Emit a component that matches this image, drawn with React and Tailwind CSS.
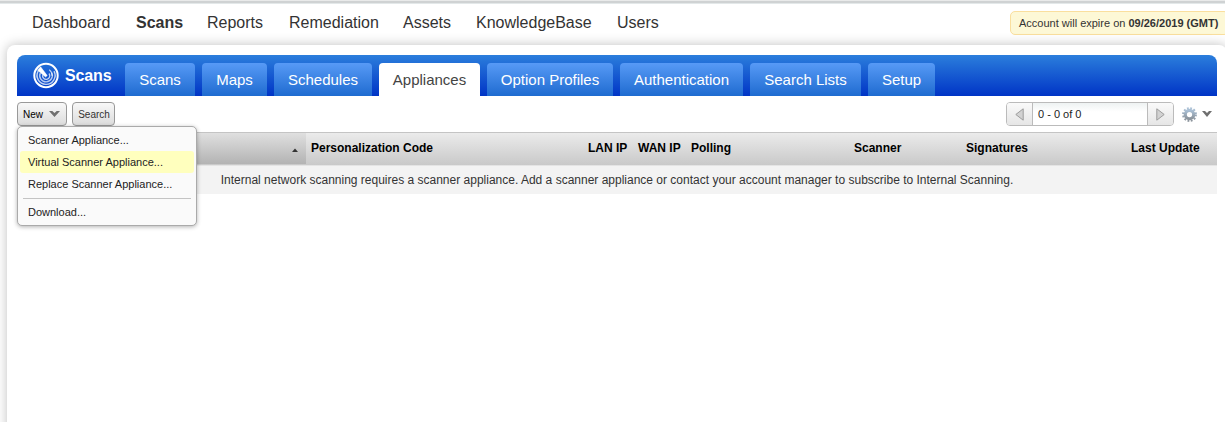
const NAV = [
  ['Dashboard', 'w-[104px]'],
  ['Scans', 'w-[71px] font-bold'],
  ['Reports', 'w-[82px]'],
  ['Remediation', 'w-[114px]'],
  ['Assets', 'w-[73px]'],
  ['KnowledgeBase', 'w-[141px]'],
  ['Users', 'w-[60px]'],
];

const TABS = [
  ['Scans', 'w-[70px]'],
  ['Maps', 'w-[65px]'],
  ['Schedules', 'w-[98px]'],
  ['Appliances', 'w-[101px]'],
  ['Option Profiles', 'w-[126px]'],
  ['Authentication', 'w-[123px]'],
  ['Search Lists', 'w-[111px]'],
  ['Setup', 'w-[67px]'],
];

const COLUMNS = [
  ['Personalization Code', 'w-[277px]'],
  ['LAN IP', 'w-[50px]'],
  ['WAN IP', 'w-[53px]'],
  ['Polling', 'w-[163px]'],
  ['Scanner', 'w-[112px]'],
  ['Signatures', 'w-[165px]'],
  ['Last Update', 'w-[80px]'],
];

function Radar() {
  return (
    <svg width="27" height="27" viewBox="0 0 27 27" fill="none" stroke="#fff">
      <circle cx="14" cy="13.5" r="11.7" strokeWidth="2" />
      <path d="M6.2 9A9 9 0 1 0 22 9.2" strokeWidth="1.4" opacity=".75" />
      <path d="M8.3 11A6.3 6.3 0 1 0 19.6 10.6" strokeWidth="1.4" opacity=".7" />
      <path d="M10.8 12.6A3.6 3.6 0 1 0 17 11.5" strokeWidth="1.3" opacity=".75" />
      <path d="M17.2 7.8q3 2.2 2.9 6.2" strokeWidth="1.1" opacity=".7" />
      <path d="M5.5 8.2 8.6 4.8 15.2 13.6 13.6 15Z" fill="#fff" strokeWidth=".5" />
    </svg>
  );
}

function Chevron({ className }) {
  return (
    <svg className={className} height="6" viewBox="0 0 12 6" preserveAspectRatio="none" fill="#707070">
      <path d="M0 0h3.6L6 2 8.4 0H12L6 6Z" />
    </svg>
  );
}

function Gear() {
  return (
    <svg width="15" height="15" viewBox="0 0 16 16">
      <defs>
        <linearGradient id="gear" x2="0" y2="1">
          <stop stopColor="#a9c0d6" />
          <stop offset="1" stopColor="#8b939b" />
        </linearGradient>
      </defs>
      <circle cx="8" cy="8" r="4.5" fill="none" stroke="url(#gear)" strokeWidth="3.4" />
      <circle cx="8" cy="8" r="6.8" fill="none" stroke="url(#gear)" strokeWidth="2.2" strokeDasharray="1.9 1.66" />
    </svg>
  );
}

function Arrow({ left }) {
  return (
    <svg width="9" height="13" viewBox="0 0 9 13" fill="#d2d2d2" stroke="#9c9c9c">
      <path d={left ? 'M8.2 .8v11.4L.8 6.5Z' : 'M.8 .8v11.4l7.4-5.7Z'} />
    </svg>
  );
}

function MenuItem({ label, active }) {
  return (
    <div className={`mx-[2px] flex h-[22px] items-center rounded-[3px] pl-2 ${active ? 'bg-[#ffffbe]' : ''}`}>{label}</div>
  );
}

export default function App() {
  return (
    <div className="flex h-[422px] w-[1225px] flex-col overflow-hidden bg-white font-['Liberation_Sans',Arial,sans-serif] text-[#333]">
      <div className="h-1 shrink-0 border-t border-b border-t-[#e9eaea] border-b-[#e3e8e9] bg-[#cfd2d3]" />
      <div className="flex h-[41px] shrink-0 items-start justify-between">
        <nav className="flex pt-[7px] pl-8 text-[16px] leading-6">
          {NAV.map(([label, cls]) => (
            <a key={label} className={cls}>{label}</a>
          ))}
        </nav>
        <div className="mt-[7px] -mr-1 flex h-6 w-[219px] items-center rounded-[5px] border border-[#fadf9e] bg-[#fdf8d6] pl-2 text-[11px] whitespace-pre">
          Account will expire on <b>09/26/2019 (GMT)</b>
        </div>
      </div>

      <main className="ml-[7px] h-[400px] w-[1220px] shrink-0 rounded-t-[8px] bg-white px-[10px] pt-[10px] shadow-[0_0_12px_rgba(0,0,0,0.25)]">
        <header className="flex h-[41px] items-end rounded-t-[8px] bg-linear-to-b/srgb from-[#2b7edc] to-[#0034c6]">
          <div className="flex h-[41px] w-[108px] items-center pl-[15px] text-[16px] font-bold text-white">
            <Radar />
            <span className="ml-[6px] leading-none tracking-[-0.15px]">Scans</span>
          </div>
          <div className="flex gap-[7px]">
            {TABS.map(([label, cls]) => (
              <div
                key={label}
                className={`flex h-[33px] items-center justify-center rounded-t-[4px] pt-[2px] text-[15px] whitespace-nowrap ${cls} ${
                  label === 'Appliances' ? 'bg-white text-[#444]' : 'bg-linear-to-b/srgb from-[#579af6] to-[#1f6bd0] text-white'
                }`}
              >
                {label}
              </div>
            ))}
          </div>
        </header>

        <div className="flex h-9 items-start justify-between pt-[6px]">
          <div className="flex gap-[5px] text-[10px]">
            <div className="relative">
              <button className="flex h-6 w-[50px] items-center justify-between rounded-[4px] border border-[#999] bg-linear-to-b from-[#f8f8f8] to-[#dcdcdc] pr-[6px] pl-[5px] text-black">
                New
                <Chevron className="w-[11px]" />
              </button>
              <div className="absolute top-6 left-0 z-10 h-[100px] w-[180px] rounded-[5px] border border-[#aaa] bg-[#fafafa] pt-[2px] text-[11px] text-[#222] shadow-[0_1px_4px_rgba(0,0,0,0.3)]">
                <MenuItem label="Scanner Appliance..." />
                <MenuItem label="Virtual Scanner Appliance..." active />
                <MenuItem label="Replace Scanner Appliance..." />
                <div className="mx-[5px] mt-[3px] mb-[2px] h-px bg-[#c4c4c4]" />
                <MenuItem label="Download..." />
              </div>
            </div>
            <button className="h-6 w-[43px] rounded-[4px] border border-[#999] bg-linear-to-b from-[#f8f8f8] to-[#dcdcdc] pl-px">Search</button>
          </div>
          <div className="flex items-center pr-[5px]">
            <div className="flex h-6 w-[168px] overflow-hidden rounded-[4px] border border-[#bbb] text-[11px] text-[#222]">
              <div className="flex w-[26px] items-center justify-center border-r border-[#bbb] bg-linear-to-b from-[#fafafa] to-[#e6e6e6]">
                <Arrow left />
              </div>
              <div className="flex flex-1 items-center bg-linear-to-b from-[#eef2f2] to-white to-40% pl-[5px]">0 - 0 of 0</div>
              <div className="flex w-[26px] items-center justify-center border-l border-[#bbb] bg-linear-to-b from-[#fafafa] to-[#e6e6e6]">
                <Arrow />
              </div>
            </div>
            <div className="ml-2 flex items-center gap-[5px]">
              <Gear />
              <Chevron className="w-[10px]" />
            </div>
          </div>
        </div>

        <section className="text-[12px]">
          <div className="flex h-[33px] border-t border-[#c4c4c4] bg-linear-to-b from-[#ebebeb] to-[#c9c9c9] leading-[30px] font-bold text-black">
            <div className="flex h-[31px] w-[289px] justify-end bg-linear-to-b from-[#e0e0e0] to-[#b3b3b3] pt-[15px] pr-2">
              <svg width="6" height="4" viewBox="0 0 6 4" fill="#333">
                <path d="M0 4 3 .5 6 4Z" />
              </svg>
            </div>
            <div className="flex pl-[5px] whitespace-nowrap">
              {COLUMNS.map(([label, cls]) => (
                <div key={label} className={cls}>{label}</div>
              ))}
            </div>
          </div>
          <div className="h-[29px] border-t border-[#e4e4e4] bg-[#f3f3f3] text-center leading-7">
            Internal network scanning requires a scanner appliance. Add a scanner appliance or contact your account manager to subscribe to Internal Scanning.
          </div>
        </section>
      </main>
    </div>
  );
}
